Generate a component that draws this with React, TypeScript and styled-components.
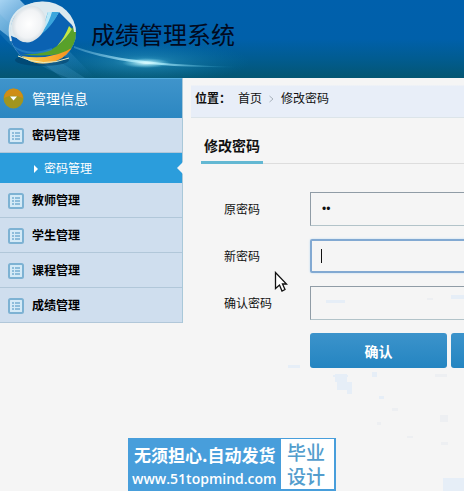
import React from 'react';
import styled, { createGlobalStyle, css } from 'styled-components';

const GlobalStyle = createGlobalStyle`
  * { box-sizing: border-box; }
  body {
    margin: 0;
    background: #f5f5f5;
    color: #111;
    font: 12px/18px "Liberation Sans", "Noto Sans CJK SC", sans-serif;
    overflow: hidden;
  }
  a { color: inherit; text-decoration: none; }
`;

const Page = styled.div`
  position: relative;
  min-height: 100vh;
  overflow: hidden;
`;

const Header = styled.header`
  position: relative;
  display: flex;
  align-items: center;
  height: 78px;
  overflow: hidden;
  background: linear-gradient(#0060ac 0%, #0060aa 50%, #015c91 75%, #045672 100%);
`;

const HeaderArt = styled.svg`
  position: absolute;
  left: 0;
  top: 0;
`;

const SystemName = styled.h1`
  position: relative;
  margin: 0 0 6px 91px;
  font-size: 24px;
  line-height: 32px;
  font-weight: 400;
  color: #020a20;
  white-space: nowrap;
`;

const Body = styled.div`
  position: relative;
  display: flex;
  align-items: flex-start;
`;

const Sidebar = styled.nav`
  flex: 0 0 183px;
  background: #cfdeee;
  border-right: 1px solid #a9c8d9;
`;

const SidebarTitle = styled.div`
  display: flex;
  align-items: center;
  gap: 8px;
  height: 40px;
  padding-left: 3px;
  color: #fff;
  font-size: 14px;
  background: linear-gradient(#3f94cb, #2c87c1);
  border-top: 1px solid #55aee0;
`;

const MenuItem = styled.a`
  display: flex;
  align-items: center;
  gap: 8px;
  height: 35px;
  padding: 2px 0 0 8px;
  font-weight: 700;
  color: #000;
  border-bottom: 1px solid #b1c7d9;
`;

const SubItem = styled.a`
  position: relative;
  display: flex;
  align-items: center;
  gap: 6px;
  height: 30px;
  padding: 2px 0 0 34px;
  color: #fff;
  background: #2b9ddc;
`;

const Notch = styled.svg`
  position: absolute;
  right: -1px;
  top: 9px;
`;

const Main = styled.main`
  flex: 1;
  min-width: 0;
  overflow: hidden;
`;

const Backdrop = styled.svg`
  position: absolute;
  left: 183px;
  top: 78px;
`;

const Breadcrumb = styled.div`
  display: flex;
  align-items: center;
  gap: 7px;
  height: 40px;
  margin-left: 8px;
  padding: 2px 0 0 4px;
  background: linear-gradient(#f5f5f5 7px, #e8eef8 8px);
  border-bottom: 1px solid #dce4e9;
  white-space: nowrap;
`;

const Section = styled.section`
  padding: 14px 0 0 18px;
`;

const TitleBar = styled.div`
  display: flex;
  border-bottom: 1px solid #ddd;
`;

const Title = styled.h2`
  margin: 0 0 -1px;
  padding: 0 3px;
  font-size: 14px;
  line-height: 29px;
  border-bottom: 3px solid #63b8d3;
`;

const Form = styled.form`
  display: grid;
  grid-template-columns: 86px minmax(345px, 1fr);
  row-gap: 13px;
  align-items: center;
  padding: 28px 0 0 23px;
`;

const Label = styled.label`
  padding-top: 2px;
`;

const Field = styled.div`
  position: relative;
  display: flex;
`;

const PasswordInput = styled.input<{ $active?: boolean }>`
  width: 345px;
  height: 34px;
  padding: 0 11px;
  font: 12px "Liberation Sans", sans-serif;
  color: #111;
  background: transparent;
  border: 1px solid #b2c3c9;
  border-top-color: #909ca6;
  border-left-color: #909ca6;
  outline: none;
  ${p => p.$active && css`
    border: 2px solid #82a9d2;
    border-radius: 2px;
    box-shadow: 0 0 2px #b4d8f2;
  `}
`;

const Caret = styled.span`
  position: absolute;
  left: 11px;
  top: 10px;
  width: 1px;
  height: 14px;
  background: #111;
`;

const Actions = styled.div`
  grid-column: 2;
  display: flex;
  gap: 4px;
`;

const Button = styled.button`
  flex: 0 0 137px;
  height: 35px;
  padding: 0;
  border: 0;
  border-radius: 3px;
  color: #fff;
  font: 700 14px "Liberation Sans", "Noto Sans CJK SC", sans-serif;
  background: linear-gradient(#3c93cb, #2485c1);
`;

const Pointer = styled.svg`
  position: absolute;
  left: 274px;
  top: 271px;
`;

const Banner = styled.a`
  position: absolute;
  left: 128px;
  top: 438px;
  display: flex;
  height: 53px;
  padding: 1px 2px 2px 0;
  background: #489edb;
  color: #fff;
  white-space: nowrap;
`;

const BannerText = styled.span`
  display: flex;
  flex-direction: column;
  width: 153px;
  padding: 3px 0 0 4px;
`;

const Slogan = styled.span`
  padding-left: 2px;
  font: 700 17px/26px "Noto Sans CJK SC", sans-serif;
`;

const Site = styled.span`
  font: 600 14px/22px "Open Sans", sans-serif;
`;

const Stamp = styled.span`
  width: 53px;
  padding: 1px 0 0 6px;
  background: #fff;
  color: #539dcd;
  font: 500 19px/24px "Noto Sans CJK SC", sans-serif;
`;

const ListIcon = () => (
  <svg width="16" height="16" viewBox="0 0 16 16" fill="none" aria-hidden="true">
    <rect x="1" y="1" width="14" height="14" rx="1.5" fill="#d4eaf7" stroke="#7db2d3" strokeWidth="2" />
    <path d="M4 5h2M4 8h2M4 11h2M7 5h5M7 8h5M7 11h5" stroke="#76aed2" strokeWidth="1.4" />
  </svg>
);

const Logo = () => (
  <HeaderArt width="320" height="78" viewBox="0 0 320 78" aria-hidden="true">
    <defs>
      <linearGradient id="beam" x1="0" y1="0" x2="1" y2="1">
        <stop stopColor="#b9e0fa" stopOpacity=".9" />
        <stop offset="1" stopColor="#2687c5" stopOpacity="0" />
      </linearGradient>
      <linearGradient id="ray" x1="0" x2="1">
        <stop stopColor="#6eb9dd" stopOpacity=".4" />
        <stop offset=".45" stopColor="#b9f2ff" />
        <stop offset="1" stopColor="#0f89ba" stopOpacity="0" />
      </linearGradient>
      <radialGradient id="glow">
        <stop stopColor="#62cdec" />
        <stop offset=".3" stopColor="#38a9d2" stopOpacity=".55" />
        <stop offset="1" stopColor="#0980b4" stopOpacity="0" />
      </radialGradient>
      <radialGradient id="spark">
        <stop stopColor="#e2fdff" />
        <stop offset="1" stopColor="#8de4f5" stopOpacity="0" />
      </radialGradient>
      <radialGradient id="pearl">
        <stop stopColor="#fff" />
        <stop offset=".75" stopColor="#f1f3f5" />
        <stop offset="1" stopColor="#d8e0e5" />
      </radialGradient>
      <linearGradient id="orange" x1="0" x2="1">
        <stop stopColor="#ffd75b" />
        <stop offset="1" stopColor="#f58a14" />
      </linearGradient>
      <clipPath id="ball"><ellipse cx="43" cy="32.500" rx="33" ry="31" /></clipPath>
    </defs>
    <path d="M0 0h20L95 78H62L0 30Z" fill="url(#beam)" />
    <path d="M0 14Q23 39 85 78H68Q22 60 0 34Z" fill="#54a9d7" opacity=".2" />
    <ellipse cx="145" cy="62" rx="105" ry="22" fill="url(#glow)" opacity=".6" />
    <path d="M74 46Q120 64 240 67Q126 69 74 48Z" fill="url(#ray)" />
    <ellipse cx="146" cy="63" rx="24" ry="5" fill="url(#spark)" />
    <ellipse cx="42" cy="60" rx="27" ry="6" fill="#003962" opacity=".5" />
    <g clipPath="url(#ball)">
      <rect x="8" width="70" height="66" fill="#dce9ef" />
      <path d="M8 34Q24 44 40 35Q53 23 59 12L72 25L78 34V66H8Z" fill="#0b62b2" />
      <path d="M48 12L59 12Q49 33 27 43Q43 32 48 12Z" fill="#3ba5dc" />
      <path d="M48 12L52 12Q46 33 31 41Q44 30 48 12Z" fill="#bce9f8" />
      <path d="M73 27L78 35L76 48Q56 59 20 54Q44 56 57 46Q67 39 73 27Z" fill="#58a129" />
      <path d="M69 26L72 29Q67 38 57 46Q65 37 69 26Z" fill="#c5e743" />
      <path d="M21 56Q53 61 75 46L70 60Q43 72 21 56Z" fill="url(#orange)" />
      <path d="M11 45Q28 58 52 49" fill="none" stroke="#348fcb" strokeWidth="2" opacity=".6" />
    </g>
    <ellipse cx="29" cy="24" rx="16" ry="19" transform="rotate(28 29 24)" fill="url(#pearl)" />
    <path d="M11 41Q5 16 26 6Q49-3 66 13Q74 21 75 32" fill="none" stroke="#dce9ef" strokeWidth="2" />
    <path d="M18 56Q43 68 69 58" fill="none" stroke="#e7edc4" strokeWidth="1" />
  </HeaderArt>
);

const menu = ['教师管理', '学生管理', '课程管理', '成绩管理'];

export default function App() {
  return (
    <Page>
      <GlobalStyle />
      <Header>
        <Logo />
        <SystemName>成绩管理系统</SystemName>
      </Header>
      <Backdrop width="281" height="413" viewBox="0 0 281 413" aria-hidden="true">
        <path d="M152 296h12v8h5v12h-5v-4h-10v-8h-2ZM189 294h5v5h-5ZM196 318h5v3h-5ZM260 400h21v13h-21ZM143 222h19v3h-19ZM268 217h13v4h-13ZM105 287h12v3h-12ZM150 297h15v2h-15Z" fill="#e6eef7" />
        <path d="M257 337h8v7h-8ZM209 330h6v3h-6ZM258 364h7v3h-7ZM252 296h12v3h-12ZM194 344h4v3h-4ZM224 358h6v2h-6ZM244 220h6v2h-6Z" fill="#edeff2" />
      </Backdrop>
      <Body>
        <Sidebar aria-label="管理信息">
          <SidebarTitle>
            <svg width="21" height="21" viewBox="0 0 21 21" aria-hidden="true">
              <circle cx="10.500" cy="10.500" r="10" fill="#a1951f" />
              <path d="M1 10a9.500 9.500 0 0 1 19 0Q10 5 1 10Z" fill="#cf8d16" />
              <path d="M7 8.500h7l-3.500 4Z" fill="#fff" />
            </svg>
            管理信息
          </SidebarTitle>
          <MenuItem href="#password"><ListIcon />密码管理</MenuItem>
          <SubItem href="#change" aria-current="page">
            <svg width="4" height="8" viewBox="0 0 4 8" aria-hidden="true"><path d="M0 0l4 4-4 4Z" fill="#fff" /></svg>
            密码管理
            <Notch width="6" height="12" viewBox="0 0 6 12" aria-hidden="true"><path d="M6 0L0 6l6 6Z" fill="#f5f5f5" /></Notch>
          </SubItem>
          {menu.map(label => <MenuItem key={label} href={`#${label}`}><ListIcon />{label}</MenuItem>)}
        </Sidebar>
        <Main>
          <Breadcrumb>
            <strong>位置：</strong>
            <a href="#home">首页</a>
            <svg width="5" height="8" viewBox="0 0 5 8" fill="none" aria-hidden="true"><path d="M.5 1l3.500 3-3.500 3" stroke="#a9b2bb" /></svg>
            <a href="#change">修改密码</a>
          </Breadcrumb>
          <Section>
            <TitleBar><Title>修改密码</Title></TitleBar>
            <Form onSubmit={e => e.preventDefault()}>
              <Label htmlFor="old">原密码</Label>
              <Field><PasswordInput id="old" type="password" defaultValue="12" /></Field>
              <Label htmlFor="new">新密码</Label>
              <Field><PasswordInput id="new" type="password" $active /><Caret /></Field>
              <Label htmlFor="confirm">确认密码</Label>
              <Field><PasswordInput id="confirm" type="password" /></Field>
              <Actions>
                <Button type="submit">确认</Button>
                <Button type="reset" aria-label="取消" />
              </Actions>
            </Form>
          </Section>
        </Main>
      </Body>
      <Pointer width="14" height="22" viewBox="0 0 14 22" aria-hidden="true">
        <path d="M1.500 1.500v16l4-3.500 2.500 6 3-1.500-2.500-5.500h4Z" fill="#fff" stroke="#111" strokeWidth="1.3" />
      </Pointer>
      <Banner href="#shop">
        <BannerText><Slogan>无须担心.自动发货</Slogan><Site>www.51topmind.com</Site></BannerText>
        <Stamp>毕业<br />设计</Stamp>
      </Banner>
    </Page>
  );
}
